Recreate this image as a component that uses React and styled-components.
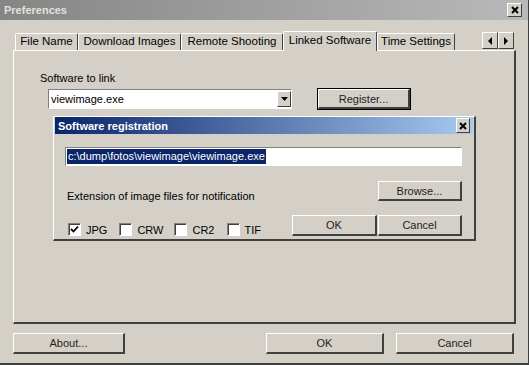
import React from "react";
import styled, { createGlobalStyle } from "styled-components";

const Colors = {
  FACE: "#d4d0c8",
  LIGHT: "#ffffff",
  SHADOW: "#808080",
  DARK: "#404040",
  NAVY: "#0a246a",
};

const GlobalStyle = createGlobalStyle`
  html, body {
    margin: 0;
    padding: 0;
    background: ${Colors.FACE};
    overflow: hidden;
  }
  body {
    font-family: "Liberation Sans", Arial, sans-serif;
    font-size: 11px;
    color: #000;
  }
`;

const Window = styled.div`
  width: 529px;
  height: 365px;
  box-sizing: border-box;
  background: ${Colors.FACE};
  border-right: 1px solid ${Colors.DARK};
  border-bottom: 2px solid ${Colors.DARK};
  display: flex;
  flex-direction: column;
`;

const TitleBar = styled.div`
  height: 20px;
  flex-shrink: 0;
  display: flex;
  align-items: center;
  justify-content: space-between;
  padding: 0 6px 0 4px;
  background: linear-gradient(to right, #858585, #b9b9b9);
`;

const Title = styled.div`
  color: ${(p) => p.color || "#e4e1da"};
  font-weight: bold;
  font-size: 11px;
`;

const CloseBox = styled.div`
  width: ${(p) => p.w || 12}px;
  height: ${(p) => p.h || 12}px;
  background: ${Colors.FACE};
  border-top: 1px solid ${Colors.LIGHT};
  border-left: 1px solid ${Colors.LIGHT};
  border-right: 1px solid ${Colors.DARK};
  border-bottom: 1px solid ${Colors.DARK};
  display: flex;
  align-items: center;
  justify-content: center;
`;

const TabRow = styled.div`
  height: 19px;
  margin-top: 11px;
  padding-left: 15px;
  padding-right: 14px;
  display: flex;
  align-items: flex-end;
  font-size: 11.5px;
`;

const Tab = styled.div`
  box-sizing: border-box;
  width: ${(p) => p.w}px;
  height: ${(p) => (p.active ? 20 : 17)}px;
  padding-top: ${(p) => (p.active ? 2 : 1)}px;
  margin-bottom: ${(p) => (p.active ? -1 : 0)}px;
  text-align: center;
  position: relative;
  z-index: ${(p) => (p.active ? 2 : 1)};
  background: ${Colors.FACE};
  border-top: 1px solid ${Colors.LIGHT};
  border-left: 1px solid ${Colors.LIGHT};
  border-right: 1px solid ${Colors.DARK};
  border-radius: 2px 2px 0 0;
  white-space: nowrap;
`;

const Spacer = styled.div`
  flex: 1;
`;

const ArrowGroup = styled.div`
  display: flex;
  align-self: flex-start;
  margin-top: 1px;
`;

const ArrowButton = styled.div`
  box-sizing: border-box;
  width: 16px;
  height: 17px;
  background: ${Colors.FACE};
  border-top: 1px solid ${Colors.LIGHT};
  border-left: 1px solid ${Colors.LIGHT};
  border-right: 1px solid ${Colors.DARK};
  border-bottom: 1px solid ${Colors.DARK};
  display: flex;
  align-items: center;
  justify-content: center;
`;

const Panel = styled.div`
  box-sizing: border-box;
  margin: 0 12px 0 13px;
  height: 274px;
  flex-shrink: 0;
  border-top: 1px solid ${Colors.LIGHT};
  border-left: 1px solid ${Colors.LIGHT};
  border-right: 2px solid ${Colors.DARK};
  border-bottom: 2px solid ${Colors.DARK};
  padding: 21px 0 0 26px;
  position: relative;
`;

const Label = styled.div`
  height: 13px;
  line-height: 13px;
`;

const ComboRow = styled.div`
  display: flex;
  align-items: center;
  margin-top: 4px;
  padding-left: 8px;
  gap: 26px;
`;

const Combo = styled.div`
  box-sizing: border-box;
  width: 244px;
  height: 20px;
  background: #fff;
  border-top: 1px solid ${Colors.SHADOW};
  border-left: 1px solid ${Colors.SHADOW};
  border-right: 1px solid ${Colors.LIGHT};
  border-bottom: 1px solid ${Colors.LIGHT};
  display: flex;
  align-items: center;
  padding-left: 2px;
`;

const ComboText = styled.div`
  flex: 1;
`;

const DropButton = styled(ArrowButton)`
  width: 14px;
  height: 16px;
`;

const Button = styled.div`
  box-sizing: border-box;
  width: ${(p) => p.w}px;
  height: ${(p) => p.h || 21}px;
  background: ${Colors.FACE};
  border-top: 1px solid ${Colors.LIGHT};
  border-left: 1px solid ${Colors.LIGHT};
  border-right: 2px solid ${Colors.DARK};
  border-bottom: 2px solid ${Colors.DARK};
  box-shadow: ${(p) => (p.primary ? "0 0 0 1px #000" : "none")};
  display: flex;
  align-items: center;
  justify-content: center;
  color: #222;
`;

const SubDialog = styled.div`
  position: absolute;
  left: 39px;
  top: 65px;
  width: 423px;
  height: 125px;
  box-sizing: border-box;
  background: ${Colors.FACE};
  border-top: 1px solid ${Colors.LIGHT};
  border-left: 1px solid ${Colors.LIGHT};
  border-right: 2px solid ${Colors.DARK};
  border-bottom: 2px solid ${Colors.DARK};
  display: flex;
  flex-direction: column;
`;

const SubTitleBar = styled.div`
  height: 17px;
  margin: 0 1px;
  display: flex;
  align-items: center;
  justify-content: space-between;
  padding: 0 3px 0 3px;
  background: linear-gradient(to right, ${Colors.NAVY}, #a6caf0);
`;

const SubBody = styled.div`
  padding: 13px 12px 0 11px;
  display: flex;
  flex-direction: column;
`;

const PathInput = styled.div`
  box-sizing: border-box;
  height: 19px;
  background: #fff;
  border-top: 1px solid ${Colors.SHADOW};
  border-left: 1px solid ${Colors.SHADOW};
  border-right: 1px solid ${Colors.LIGHT};
  border-bottom: 1px solid ${Colors.LIGHT};
  padding: 1px 1px;
  display: flex;
  align-items: center;
`;

const Selected = styled.span`
  background: ${Colors.NAVY};
  color: #fff;
  padding: 0 1px;
  line-height: 15px;
`;

const BrowseRow = styled.div`
  display: flex;
  justify-content: space-between;
  align-items: flex-end;
  margin-top: 15px;
  padding-left: 2px;
`;

const ExtLabel = styled.div`
  margin-bottom: -1px;
`;

const ActionRow = styled.div`
  display: flex;
  justify-content: space-between;
  align-items: center;
  margin-top: 13px;
`;

const CheckGroup = styled.div`
  display: flex;
  align-items: center;
  padding-left: 3px;
  padding-top: 9px;
`;

const CheckItem = styled.label`
  display: flex;
  align-items: center;
  gap: 5px;
  margin-right: ${(p) => p.gap}px;
`;

const Box = styled.div`
  box-sizing: border-box;
  width: 13px;
  height: 13px;
  background: #fff;
  border-top: 1px solid ${Colors.SHADOW};
  border-left: 1px solid ${Colors.SHADOW};
  border-right: 1px solid ${Colors.LIGHT};
  border-bottom: 1px solid ${Colors.LIGHT};
  box-shadow: inset 1px 1px 0 ${Colors.DARK};
  display: flex;
  align-items: center;
  justify-content: center;
`;

const ButtonPair = styled.div`
  display: flex;
  gap: 1px;
`;

const Footer = styled.div`
  display: flex;
  align-items: center;
  padding: 9px 14px 0 13px;
`;

const FooterRight = styled.div`
  margin-left: auto;
  display: flex;
  gap: 12px;
`;

const XIcon = () => (
  <svg width="8" height="8" viewBox="0 0 8 8">
    <path d="M1 1 L7 7 M7 1 L1 7" stroke="#000" strokeWidth="2" />
  </svg>
);

const Triangle = ({ dir }) => (
  <svg width="6" height="8" viewBox="0 0 6 8">
    {dir === "left" ? (
      <path d="M5 0 L5 8 L1 4 Z" fill="#000" />
    ) : (
      <path d="M1 0 L1 8 L5 4 Z" fill="#000" />
    )}
  </svg>
);

const DownTriangle = () => (
  <svg width="7" height="4" viewBox="0 0 7 4">
    <path d="M0 0 L7 0 L3.5 4 Z" fill="#000" />
  </svg>
);

const Check = () => (
  <svg width="9" height="9" viewBox="0 0 9 9">
    <path d="M1 4 L3.5 6.5 L8 1.5" stroke="#000" strokeWidth="1.8" fill="none" />
  </svg>
);

const tabs = [
  { name: "File Name", w: 63 },
  { name: "Download Images", w: 103 },
  { name: "Remote Shooting", w: 102 },
  { name: "Linked Software", w: 94, active: true },
  { name: "Time Settings", w: 78 },
];

const extensions = [
  { name: "JPG", checked: true, gap: 12 },
  { name: "CRW", checked: false, gap: 11 },
  { name: "CR2", checked: false, gap: 12 },
  { name: "TIF", checked: false, gap: 0 },
];

export default function App() {
  return (
    <>
      <GlobalStyle />
      <Window>
        <TitleBar>
          <Title>Preferences</Title>
          <CloseBox w={13}>
            <XIcon />
          </CloseBox>
        </TitleBar>

        <TabRow>
          {tabs.map((t) => (
            <Tab key={t.name} w={t.w} active={t.active}>
              {t.name}
            </Tab>
          ))}
          <Spacer />
          <ArrowGroup>
            <ArrowButton>
              <Triangle dir="left" />
            </ArrowButton>
            <ArrowButton>
              <Triangle dir="right" />
            </ArrowButton>
          </ArrowGroup>
        </TabRow>

        <Panel>
          <Label>Software to link</Label>
          <ComboRow>
            <Combo>
              <ComboText>viewimage.exe</ComboText>
              <DropButton>
                <DownTriangle />
              </DropButton>
            </Combo>
            <Button w={92} h={20} primary>
              Register...
            </Button>
          </ComboRow>

          <SubDialog>
            <SubTitleBar>
              <Title color="#fff">Software registration</Title>
              <CloseBox h={13}>
                <XIcon />
              </CloseBox>
            </SubTitleBar>
            <SubBody>
              <PathInput>
                <Selected>c:\dump\fotos\viewimage\viewimage.exe</Selected>
              </PathInput>
              <BrowseRow>
                <ExtLabel>Extension of image files for notification</ExtLabel>
                <Button w={84} h={20}>
                  Browse...
                </Button>
              </BrowseRow>
              <ActionRow>
                <CheckGroup>
                  {extensions.map((e) => (
                    <CheckItem key={e.name} gap={e.gap}>
                      <Box>{e.checked && <Check />}</Box>
                      {e.name}
                    </CheckItem>
                  ))}
                </CheckGroup>
                <ButtonPair>
                  <Button w={85} h={21}>
                    OK
                  </Button>
                  <Button w={84} h={21}>
                    Cancel
                  </Button>
                </ButtonPair>
              </ActionRow>
            </SubBody>
          </SubDialog>
        </Panel>

        <Footer>
          <Button w={112}>About...</Button>
          <FooterRight>
            <Button w={118}>OK</Button>
            <Button w={118}>Cancel</Button>
          </FooterRight>
        </Footer>
      </Window>
    </>
  );
}
